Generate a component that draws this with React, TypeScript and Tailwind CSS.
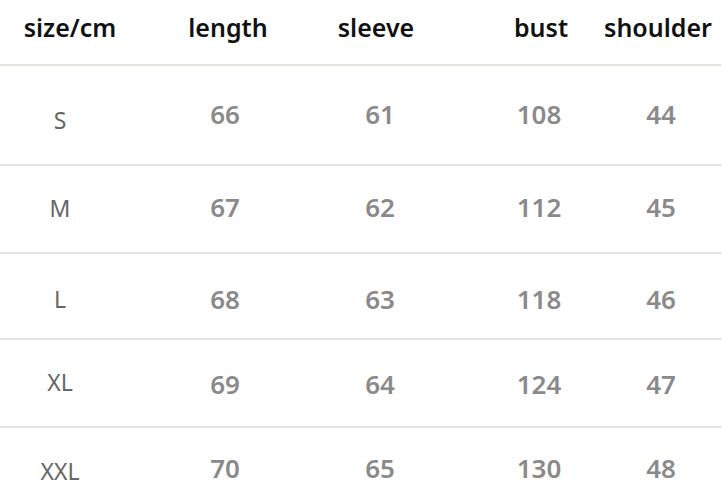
const rows = [
  { size: "S", vals: ["66", "61", "108", "44"], h: "h-[100px]", sizePt: "pt-[42px]", numPt: "pt-[36px]" },
  { size: "M", vals: ["67", "62", "112", "45"], h: "h-[88px]", sizePt: "pt-[30px]", numPt: "pt-[29px]" },
  { size: "L", vals: ["68", "63", "118", "46"], h: "h-[86px]", sizePt: "pt-[33px]", numPt: "pt-[33px]" },
  { size: "XL", vals: ["69", "64", "124", "47"], h: "h-[88px]", sizePt: "pt-[30px]", numPt: "pt-[32px]" },
  { size: "XXL", vals: ["70", "65", "130", "48"], h: "h-[66px]", sizePt: "pt-[31px]", numPt: "pt-[28px]" },
];

const headers = ["size/cm", "length", "sleeve", "bust", "shoulder"];
// left offsets per column so the text centres line up with the picture
const headGaps = ["ml-[16px]", "ml-[50px]", "ml-[40px]", "ml-[57px]", "ml-[9px]"];
const cellGaps = ["ml-[6px]", "ml-[57px]", "ml-[47px]", "ml-[51px]", "ml-[14px]"];

export default function App() {
  return (
    <div className="w-[723px] h-[494px] bg-white overflow-hidden font-['Noto_Sans',sans-serif]">
      {/* Header */}
      <div className="flex w-[721px] h-[66px] border-b-2 border-[#e6e3df] pt-[15px]">
        {headers.map((h, i) => (
          <div key={h} className={`w-[108px] shrink-0 text-center text-[25px] leading-[25px] font-semibold text-[#111] whitespace-nowrap ${headGaps[i]}`}>
            {h}
          </div>
        ))}
      </div>

      {rows.map((r, ri) => (
        <div
          key={r.size}
          className={`flex w-[721px] ${r.h} ${ri < rows.length - 1 ? "border-b-2 border-[#e6e3df]" : ""}`}
        >
          <div className={`w-[108px] shrink-0 text-center text-[23px] leading-[24px] text-[#666] ${cellGaps[0]} ${r.sizePt}`}>
            {r.size}
          </div>
          {r.vals.map((v, i) => (
            <div
              key={i}
              className={`w-[108px] shrink-0 text-center text-[26px] leading-[24px] font-semibold text-[#8a8a8a] ${cellGaps[i + 1]} ${r.numPt}`}
            >
              {v}
            </div>
          ))}
        </div>
      ))}
    </div>
  );
}
